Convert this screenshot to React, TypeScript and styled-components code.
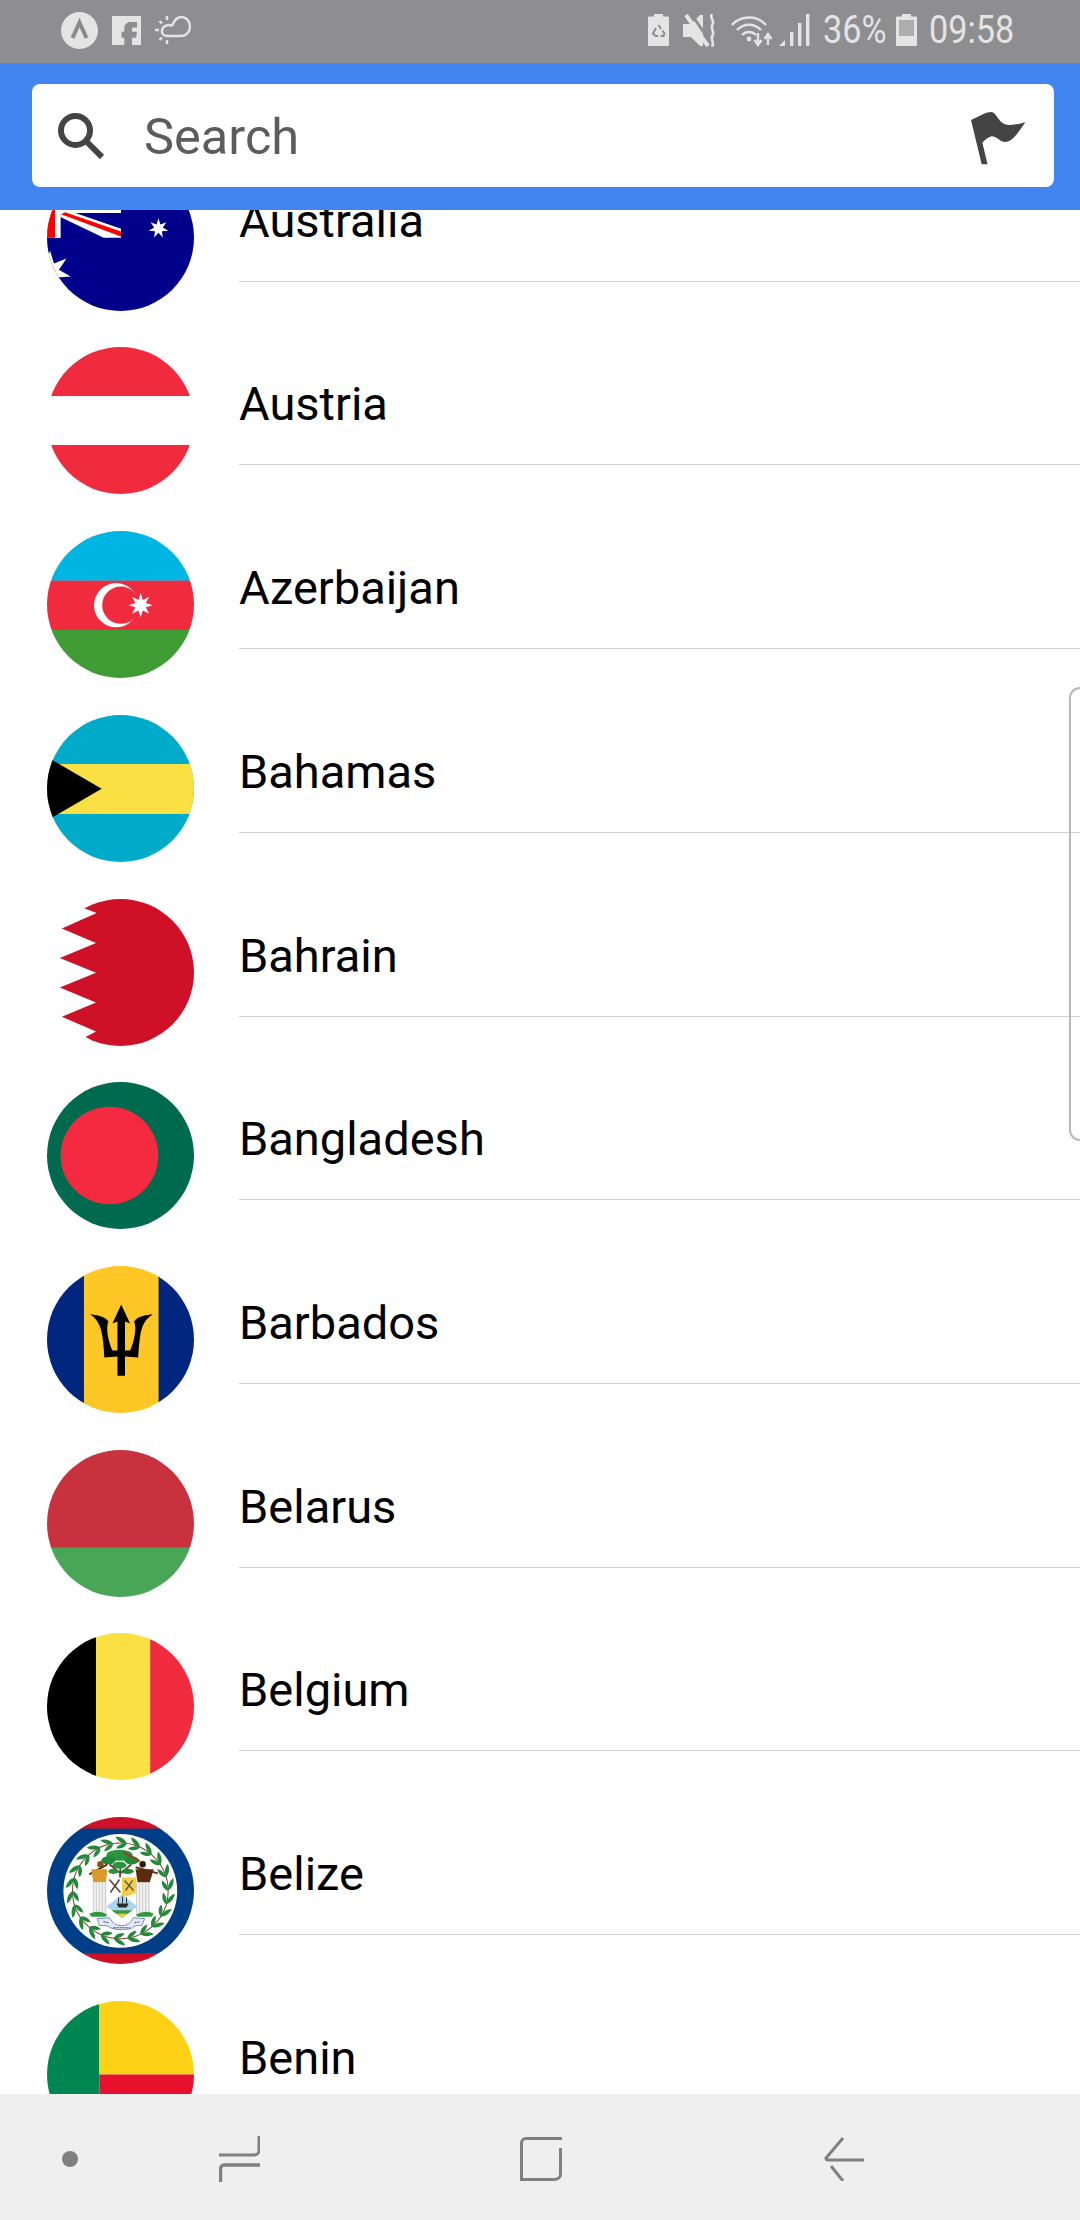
import React from "react";
import styled, { createGlobalStyle } from "styled-components";

const GlobalStyle = createGlobalStyle`
  html, body {
    margin: 0;
    padding: 0;
    background: #fff;
    font-family: Roboto, "Liberation Sans", sans-serif;
  }
`;

const Page = styled.div`
  position: relative;
  display: flex;
  flex-direction: column;
  width: 1080px;
  height: 2220px;
  overflow: hidden;
  background: #fff;
`;

const StatusBar = styled.div`
  display: flex;
  align-items: center;
  justify-content: space-between;
  height: 63px;
  padding: 0 68px 3px 61px;
  background: #8e8e90;
  flex-shrink: 0;
  box-sizing: border-box;
`;

const StatusGroup = styled.div`
  display: flex;
  align-items: center;
`;

const StatusText = styled.span<{ $width: number; $left: number }>`
  display: inline-block;
  width: ${(p) => p.$width}px;
  margin-left: ${(p) => p.$left}px;
  font-size: 38px;
  line-height: 40px;
  font-weight: 400;
  color: #e4e4e4;
  white-space: nowrap;
  transform: scaleX(0.9);
  transform-origin: left center;
`;

const Header = styled.div`
  flex-shrink: 0;
  padding: 21px 26px 23px 32px;
  background: #4285f1;
`;

const SearchBox = styled.div`
  display: flex;
  align-items: center;
  justify-content: space-between;
  height: 103px;
  padding: 0 28px 0 26px;
  background: #fff;
  border-radius: 8px;
`;

const SearchLeft = styled.div`
  display: flex;
  align-items: center;
  gap: 40px;
`;

const Placeholder = styled.span`
  padding-top: 2px;
  font-size: 50.5px;
  color: #5c5c5c;
`;

const FlagMark = styled.svg`
  display: block;
  margin-top: 5px;
`;

const ListArea = styled.div`
  flex: 1;
  min-height: 0;
  overflow: hidden;
`;

// list is scrolled part way through, Australia is cut by the header
const List = styled.div`
  margin-top: -65.25px;
`;

const Row = styled.div`
  display: flex;
  align-items: flex-start;
  height: 183.7px;
  padding-left: 47px;
  box-sizing: border-box;
`;

const FlagCircle = styled.div`
  width: 147px;
  height: 147px;
  margin-top: 19px;
  border-radius: 50%;
  overflow: hidden;
  flex-shrink: 0;

  svg {
    display: block;
  }
`;

const RowBody = styled.div`
  flex: 1;
  display: flex;
  align-items: center;
  height: 137px;
  margin-left: 45px;
  padding-top: 16px;
  box-sizing: border-box;
  border-bottom: 1.5px solid #cfcfcf;
`;

const CountryName = styled.span`
  font-size: 47px;
  line-height: 54px;
  color: #000;
`;

const EdgeHandle = styled.div`
  position: absolute;
  top: 687px;
  right: 0;
  width: 9px;
  height: 450px;
  border: 2px solid #b8b8b8;
  border-right: none;
  border-radius: 13px 0 0 13px;
`;

const NavBar = styled.div`
  display: flex;
  align-items: center;
  flex-shrink: 0;
  height: 126px;
  padding: 4px 0 0 62px;
  background: #efefef;
  box-sizing: border-box;
`;

const NavDot = styled.div`
  width: 16px;
  height: 16px;
  border-radius: 50%;
  background: #808080;
  margin-right: 141px;
`;

const NavIcon = styled.svg<{ $gap?: number }>`
  display: block;
  margin-right: ${(p) => p.$gap ?? 0}px;
`;

const IconBox = styled.svg<{ $left?: number }>`
  display: block;
  margin-left: ${(p) => p.$left ?? 0}px;
  flex-shrink: 0;
`;

const Circle = ({ children }: { children: React.ReactNode }) => (
  <FlagCircle>
    <svg width="147" height="147" viewBox="0 0 146 146">
      {children}
    </svg>
  </FlagCircle>
);

const starPoints = (cx: number, cy: number, outer: number, inner: number, n: number) => {
  const pts: string[] = [];
  for (let i = 0; i < n * 2; i++) {
    const r = i % 2 === 0 ? outer : inner;
    const a = (Math.PI * i) / n - Math.PI / 2;
    pts.push(`${(cx + r * Math.cos(a)).toFixed(2)},${(cy + r * Math.sin(a)).toFixed(2)}`);
  }
  return pts.join(" ");
};

const Australia = () => (
  <Circle>
    <rect width="146" height="146" fill="#00008b" />
    <polygon points="0,0 73.5,0 73.5,48.7 13.3,48.7 13.3,73.3 0,73.3" fill="#fff" />
    <rect x="0" y="0" width="8" height="73.3" fill="#f00" />
    <polygon points="13.3,46 25.3,47.7 73.5,64.3 73.5,73.3 56.3,73.3 13.3,52.7" fill="#fff" />
    <polygon points="18,48 73.5,67 73.5,72 14,50" fill="#f00" />
    <rect x="8" y="0" width="5.3" height="73.3" fill="#fff" />
    <polygon points={starPoints(110.7, 64, 10, 4.4, 7)} fill="#fff" />
    <polygon points={starPoints(3, 107, 21, 9, 7)} fill="#fff" />
  </Circle>
);

const Austria = () => (
  <Circle>
    <rect width="146" height="48.7" fill="#ef2b3d" />
    <rect y="97.3" width="146" height="48.7" fill="#ef2b3d" />
  </Circle>
);

const Azerbaijan = () => (
  <Circle>
    <rect width="146" height="49.5" fill="#00b5e2" />
    <rect y="49.3" width="146" height="49" fill="#ef2b3d" />
    <rect y="98.3" width="146" height="48" fill="#3f9c35" />
    <circle cx="68.7" cy="73.7" r="22" fill="#fff" />
    <circle cx="73.3" cy="73.7" r="18.5" fill="#ef2b3d" />
    <polygon points={starPoints(93, 73.7, 12, 5.6, 8)} fill="#fff" />
  </Circle>
);

const Bahamas = () => (
  <Circle>
    <rect width="146" height="146" fill="#00abc9" />
    <rect y="48.7" width="146" height="49.6" fill="#fae042" />
    <polygon points="0,41.7 54.3,73.3 0,104.9" fill="#000" />
  </Circle>
);

const Bahrain = () => (
  <Circle>
    <polygon
      points="37,9.3 49.3,14 14.7,29.3 48.7,43.7 12.7,58.7 48.7,73.3 12.7,88 48.7,102.7 14.7,117 48.7,131.7 37,137.7 37,146 146,146 146,0 37,0"
      fill="#ce1126"
    />
  </Circle>
);

const Bangladesh = () => (
  <Circle>
    <rect width="146" height="146" fill="#006a4e" />
    <circle cx="62" cy="73" r="48.5" fill="#f42a41" />
  </Circle>
);

const Barbados = () => (
  <Circle>
    <rect width="37" height="146" fill="#00267f" />
    <rect x="110.400" width="36" height="146" fill="#00267f" />
    <rect x="36.700" width="74" height="146" fill="#ffc726" />
    <path
      d="M42.7 48C49 49 56 49 61 55C58 62 61 75 65 84L70 84L70 55L65 57L73.7 38.3L82.5 57L77.5 55L77.5 84L82.5 84C86.5 75 89.5 62 86.5 55C91.5 49 98.5 49 105.3 48C97 53 94 60 92.5 70C91 80 91 85 90.5 91L77.5 90L77.5 109L70 109L70 90L57 91C56.5 85 56.5 80 55 70C53.5 60 50.5 53 42.7 48Z"
      fill="#000"
    />
  </Circle>
);

const Belarus = () => (
  <Circle>
    <rect width="146" height="97.3" fill="#c8313e" />
    <rect y="97" width="146" height="49" fill="#4aa657" />
  </Circle>
);

const Belgium = () => (
  <Circle>
    <rect width="48.7" height="146" fill="#000" />
    <rect x="48.7" width="54" height="146" fill="#fae042" />
    <rect x="102.500" width="43.500" height="146" fill="#ef2b3d" />
  </Circle>
);

const wreath = Array.from({ length: 22 }, (_, i) => (i * 360) / 22 + 8);
const legLines = [0, 3, 6, 9, 12];

const Belize = () => (
  <Circle>
    <rect width="146" height="12" fill="#ce1126" />
    <rect y="134.5" width="146" height="12" fill="#ce1126" />
    <rect y="11.5" width="146" height="124" fill="#003f87" />
    <circle cx="72.8" cy="73.4" r="56.5" fill="#fff" />
    <circle cx="72.8" cy="73.4" r="47.5" fill="none" stroke="#6f4a24" strokeWidth="1" />
    {wreath.map((a) => (
      <g key={a} transform={`rotate(${a} 72.8 73.4)`}>
        <path d="M72.8 25.9C70 21.5 65.5 20 60.500 20.500C63 24.500 67.500 26.500 72.8 25.900Z" fill="#22883a" />
        <path d="M72.8 25.9C71.5 30 67.500 32.500 62.500 32C64.500 28.500 68 26 72.8 25.900Z" fill="#22883a" />
      </g>
    ))}
    {/* tree */}
    <path d="M72 72L73 48M73 56L62 47M73 56L84 47" stroke="#6b4423" strokeWidth="1.8" fill="none" />
    <ellipse cx="72" cy="38" rx="13" ry="5.500" fill="#2b9440" />
    <ellipse cx="61" cy="43" rx="7" ry="4" fill="#1f8a38" />
    <ellipse cx="84" cy="43" rx="7" ry="4" fill="#1f8a38" />
    <ellipse cx="72" cy="48" rx="7" ry="3.500" fill="#2b9440" />
    <ellipse cx="66" cy="54" rx="5" ry="2.500" fill="#2b9440" />
    <ellipse cx="80" cy="54" rx="6" ry="2.500" fill="#1f8a38" />
    <path d="M76 35L92 44" stroke="#8a4a22" strokeWidth="2.500" />
    {/* left man */}
    <circle cx="53" cy="47" r="3.2" fill="#8a5418" />
    <path d="M42 57L60 47" stroke="#5a3414" strokeWidth="2" />
    <path d="M44 52L60 52L58.500 65L46 65Z" fill="#d99a2c" />
    <rect x="45.500" y="65" width="14" height="31" fill="#f1f1f1" />
    {legLines.map((d) => (
      <path key={d} d={`M${46 + d} 65V96`} stroke="#b5b5b5" strokeWidth=".6" />
    ))}
    {/* right man */}
    <circle cx="95" cy="47" r="3.2" fill="#2f1a0c" />
    <path d="M88 50L110 56" stroke="#5a3414" strokeWidth="2" />
    <path d="M88 52L106 52L102 65L90 65Z" fill="#5c2b10" />
    <rect x="88.500" y="65" width="14" height="31" fill="#f1f1f1" />
    {legLines.map((d) => (
      <path key={d} d={`M${89 + d} 65V96`} stroke="#b5b5b5" strokeWidth=".6" />
    ))}
    {/* shield */}
    <polygon points="74.500,60 61,60 62,76 74.500,80" fill="#fff" />
    <path d="M62 62L73 75M72 62L63 75" stroke="#5a4a3a" strokeWidth="1.600" />
    <polygon points="74.500,60 89,60 88,76 74.500,80" fill="#f2cf4a" />
    <path d="M77 63L86 73M85 63L78 73" stroke="#6a5a3a" strokeWidth="1.400" />
    <polygon points="74.500,77 90,89 74.500,100 59,89" fill="#a9d6ee" />
    <polygon points="74.500,100 64,92.500 85,92.500" fill="#3c9a3c" />
    <polygon points="74.500,100 69,96 80,96" fill="#f2cf4a" />
    <path d="M69 86H81L79 90H71Z" fill="#2a2a2a" />
    <path d="M71 86V80M75 86V79M79 86V80" stroke="#333" strokeWidth="1" />
    {/* grass and scroll */}
    <path d="M42 96Q52 92 60 97L58 99H44Z" fill="#2f9a3c" />
    <path d="M88 97Q98 92 106 96L104 99H90Z" fill="#2f9a3c" />
    <path d="M50 101L62 100Q66 108 74 108Q82 108 86 100L97 101L94 108Q87 107 85 110Q74 114 63 110Q60 107 52 108Z" fill="#e3ebf7" stroke="#5d73a8" strokeWidth=".8" />
    <path d="M56 104L61 105M66 110H82M87 105L92 104" stroke="#444" strokeWidth="1" strokeDasharray="2 1" />
  </Circle>
);

const Benin = () => (
  <Circle>
    <rect width="52" height="146" fill="#008751" />
    <rect x="52" width="94" height="73" fill="#fcd116" />
    <rect x="52" y="73" width="94" height="73" fill="#e8112d" />
  </Circle>
);

const COUNTRIES: { name: string; Flag: () => React.ReactElement }[] = [
  { name: "Australia", Flag: Australia },
  { name: "Austria", Flag: Austria },
  { name: "Azerbaijan", Flag: Azerbaijan },
  { name: "Bahamas", Flag: Bahamas },
  { name: "Bahrain", Flag: Bahrain },
  { name: "Bangladesh", Flag: Bangladesh },
  { name: "Barbados", Flag: Barbados },
  { name: "Belarus", Flag: Belarus },
  { name: "Belgium", Flag: Belgium },
  { name: "Belize", Flag: Belize },
  { name: "Benin", Flag: Benin },
];

const ICON = "#e4e4e4";
const BAR = "#8e8e90";

const StatusIcons = () => (
  <StatusGroup>
    <IconBox width="37" height="37" viewBox="0 0 37 37">
      <circle cx="18.5" cy="18.5" r="18.5" fill={ICON} />
      <path d="M11.500 26L18.500 10.500L25.500 26" fill="none" stroke="#8a8a8a" strokeWidth="4" />
    </IconBox>
    <IconBox $left={14} width="29" height="29" viewBox="0 0 29 29">
      <rect width="29" height="29" fill={ICON} />
      <path d="M12.300 29V21.700H9.500V15.700H12.300V12C12.300 8.500 15 6 19 6H25V11.500H22C20.500 11.500 20 12 20 13.500V15.700H25L24 21.700H20V29Z" fill={BAR} />
    </IconBox>
    <IconBox $left={14} width="37" height="28" viewBox="0 0 37 28" fill="none" stroke={ICON}>
      <path d="M17 10C19 4 23 1 26 1C31 1 35 5 35 10.500C35 16 31 20 26 20H12C8 20 6.500 17 7 14C8 10 13 7.500 17 10" strokeWidth="2.400" />
      <path d="M0 14H4M4.500 5L7 7.500M12 0V4M4.500 24L7 21.500M12 24V28" strokeWidth="2.400" />
    </IconBox>
  </StatusGroup>
);

const SystemIcons = () => (
  <StatusGroup>
    <IconBox width="21" height="32" viewBox="0 0 21 32">
      <path d="M6 0H15V2.500H20C20.600 2.500 21 3 21 3.500V31C21 31.600 20.600 32 20 32H1C.4 32 0 31.600 0 31V3.500C0 3 .4 2.500 1 2.500H6Z" fill={ICON} />
      <path d="M10.500 11L13 15M8 14L5 19.500L7.500 22H10M12.500 22H15.500L16.500 19.500L14.500 16.500" fill="none" stroke={BAR} strokeWidth="2" />
    </IconBox>
    <IconBox $left={14} width="34" height="33" viewBox="0 0 34 33">
      <path d="M0 10H8L17 1H20V32H17L8 23H0Z" fill={ICON} />
      <path d="M8 1L29 32" stroke={BAR} strokeWidth="3" transform="translate(1 0)" />
      <path d="M3 1L25 32" stroke={ICON} strokeWidth="4" />
      <path d="M29 0C26 4 32 6 29.500 10.500C27 15 32 17 29.500 21.500C27 26 32 28 29 33" fill="none" stroke={ICON} strokeWidth="2.600" />
    </IconBox>
    <IconBox $left={14} width="43" height="33" viewBox="0 0 43 33" fill="none" stroke={ICON}>
      <path d="M1 11C10 1 26 1 35 11" strokeWidth="2.400" />
      <path d="M6 16C13 9 23 9 30 16" strokeWidth="2.400" />
      <path d="M11 21C15 17 21 17 25 21" strokeWidth="2.400" />
      <circle cx="18" cy="25" r="2.400" fill={ICON} stroke="none" />
      <path d="M27 19V30M23.500 26L27 31L30.500 26" strokeWidth="2.400" />
      <path d="M37 31V21M33.500 25L37 20L40.500 25" strokeWidth="2.400" />
    </IconBox>
    <IconBox $left={5} width="31" height="32" viewBox="0 0 31 32" fill={ICON}>
      <polygon points="0,32 6,26 6,32" />
      <rect x="11" y="18" width="3.400" height="14" />
      <rect x="19" y="9" width="3.400" height="23" />
      <rect x="27" y="0" width="3.400" height="32" />
    </IconBox>
    <StatusText $width={61} $left={13}>36%</StatusText>
    <IconBox $left={12} width="21" height="32" viewBox="0 0 21 32">
      <path d="M6 0H15V2.500H20C20.600 2.500 21 3 21 3.500V31C21 31.600 20.600 32 20 32H1C.4 32 0 31.600 0 31V3.500C0 3 .4 2.500 1 2.500H6Z" fill={ICON} />
      <rect x="3" y="6" width="15" height="16" fill="#adadad" />
    </IconBox>
    <StatusText $width={83} $left={12}>09:58</StatusText>
  </StatusGroup>
);

const SearchIcon = () => (
  <svg width="46" height="46" viewBox="0 0 46 46" fill="none" stroke="#444" strokeWidth="6">
    <circle cx="17.5" cy="17.5" r="14.5" />
    <path d="M27.500 27.500L44 44" />
  </svg>
);

const FlagIcon = () => (
  <FlagMark width="55" height="53" viewBox="0 0 55 53">
    <path
      d="M0 8C7 5 14 0 20.600 0C26 1 28 12 36 12.700C42 13.500 49 12 54.400 10C49 18 42 30 34 30C29 30 26 24.300 20.600 24.300C17 25 14 28 11.400 30.700L16.500 52.300H10.700Z"
      fill="#444"
    />
  </FlagMark>
);

const App = () => (
  <Page>
    <GlobalStyle />
    <StatusBar>
      <StatusIcons />
      <SystemIcons />
    </StatusBar>
    <Header>
      <SearchBox>
        <SearchLeft>
          <SearchIcon />
          <Placeholder>Search</Placeholder>
        </SearchLeft>
        <FlagIcon />
      </SearchBox>
    </Header>
    <ListArea>
      <List>
        {COUNTRIES.map(({ name, Flag }) => (
          <Row key={name}>
            <Flag />
            <RowBody>
              <CountryName>{name}</CountryName>
            </RowBody>
          </Row>
        ))}
      </List>
    </ListArea>
    <NavBar>
      <NavDot />
      <NavIcon $gap={260} width="41" height="46" viewBox="0 0 41 46" fill="none" stroke="#808080" strokeWidth="3">
        <path d="M40 0V14C40 17 38 19 35 19H0" />
        <path d="M41 29H5C3 29 1.500 31 1.500 33V46" strokeWidth="3.500" />
      </NavIcon>
      <NavIcon $gap={262} width="42" height="44" viewBox="0 0 42 44" fill="none" stroke="#808080" strokeWidth="3">
        <path d="M42 1.500H6C3.500 1.500 1.500 3.500 1.500 6V42.500H34C38 42.500 40.500 40 40.500 37V11" />
      </NavIcon>
      <NavIcon width="40" height="44" viewBox="0 0 40 44" fill="none" stroke="#808080" strokeWidth="3">
        <path d="M19 1L2 21C2 22 2.500 23 4 23H40" />
        <path d="M7 29L19 44" />
      </NavIcon>
    </NavBar>
    <EdgeHandle />
  </Page>
);

export default App;
